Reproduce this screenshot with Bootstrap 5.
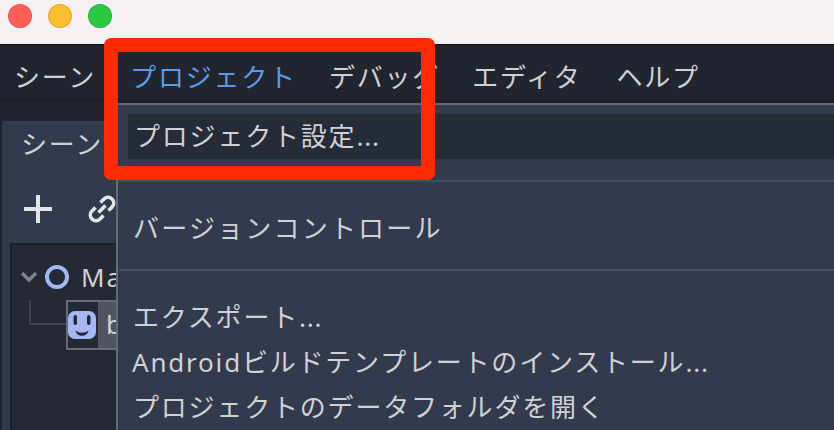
<!DOCTYPE html>
<html lang="ja">
<head>
  <meta charset="UTF-8" />
  <title>プロジェクト設定</title>
  <link href="https://cdn.jsdelivr.net/npm/bootstrap@5.3.0/dist/css/bootstrap.min.css" rel="stylesheet" />
  <style>
    html, body { height: 430px; overflow: hidden; }
    body { background: #21252f; color: #d0d1d4; font-family: "Noto Sans", "Noto Sans CJK JP", sans-serif; font-size: 26px; letter-spacing: 1.8px; line-height: 34px; position: relative; }
    .title-bar { height: 45px; background: #f6f0f2; border-bottom: 1px solid #111; padding: 4px 0 0 8px; gap: 16px; }
    .traffic { width: 24px; height: 24px; border-radius: 50%; border: 1px solid rgba(0,0,0,.1); }
    .menu-bar { height: 58px; padding: 6px 0 0 14px; background: linear-gradient(#21252f 85%, #1c1f28); gap: 32px; }
    .menu-active { color: #5c9be8; margin-left: 2px; }
    .menu-help { margin-left: 3px; }
    .work-row { height: 327px; }
    .side-panel { width: 116px; margin: 18px 0 0 2px; background: #343a4e; border-radius: 3px 0 0 0; overflow: hidden; }
    .tab-label { padding: 6px 0 0 19px; height: 50px; white-space: nowrap; }
    .tool-row { height: 72px; padding: 23px 0 0 21px; gap: 34px; }
    .tree-box { background: #252935; border: 2px solid #1c2029; border-width: 2px 0 0 2px; margin-left: 8px; height: 190px; padding: 8px 0 0 8px; white-space: nowrap; }
    .tree-line { height: 47px; }
    .tree-line svg { flex: none; }
    .node-ring { margin-left: 6px; }
    .node-name { margin-left: 11px; }
    .tree-link { width: 37px; height: 25px; border-left: 2px solid #3e4350; border-bottom: 2px solid #3e4350; margin-left: 9px; flex: none; align-self: flex-start; }
    .tree-sel { height: 50px; border: 2px solid #666b78; border-right: 0; flex: 1; }
    .sel-icon { width: 30px; flex: none; }
    .sel-text { background: #505460; flex: 1; padding-left: 8px; line-height: 44px; }
    .pop-menu { position: absolute; left: 116px; top: 103px; right: 0; bottom: 0; background: #343a4e; border: 2px solid #666b78; border-right: 0; border-bottom: 0; padding-top: 9px; }
    .pop-item { padding-left: 15px; height: 45px; line-height: 45px; white-space: nowrap; }
    .pop-item.is-hover { background: #262b38; margin-left: 10px; padding-left: 6px; }
    .pop-item.is-latin { padding-left: 14px; }
    .pop-item.is-wide { letter-spacing: 2.2px; }
    .pop-dots { letter-spacing: .8px; }
    .pop-sep { height: 2px; background: #454b5e; }
    .red-box { position: absolute; left: 104px; top: 38px; width: 331px; height: 142px; border: 14px solid #ff2a00; border-radius: 7px; }
  </style>
</head>
<body>
  <div class="title-bar d-flex">
    <span class="traffic" style="background:#ff5f57"></span>
    <span class="traffic" style="background:#febc2e"></span>
    <span class="traffic" style="background:#28c840"></span>
  </div>

  <div class="menu-bar d-flex align-items-center">
    <span>シーン</span>
    <span class="menu-active">プロジェクト</span>
    <span>デバッグ</span>
    <span>エディタ</span>
    <span class="menu-help">ヘルプ</span>
  </div>

  <div class="work-row d-flex">
    <div class="side-panel">
      <div class="tab-label">シーン</div>
      <div class="tool-row d-flex">
        <svg width="30" height="30" viewBox="0 0 30 30"><path d="M15 1v28M1 15h28" stroke="#e4e5e8" stroke-width="4" fill="none"/></svg>
        <svg width="30" height="30" viewBox="0 0 30 30" fill="none" stroke="#e4e5e8" stroke-width="3.6"><path d="M11.5 18.5l7-7"/><path d="M13.5 8.5l3.5-3.5a5.6 5.6 0 0 1 8 8l-3.5 3.5"/><path d="M16.5 21.5l-3.5 3.5a5.6 5.6 0 0 1-8-8l3.5-3.5"/></svg>
      </div>
      <div class="tree-box">
        <div class="tree-line d-flex align-items-center">
          <svg width="18" height="12" viewBox="0 0 18 12"><path d="M2 2l7 7 7-7" stroke="#808389" stroke-width="3.4" fill="none"/></svg>
          <svg width="26" height="26" viewBox="0 0 26 26" class="node-ring"><circle cx="13" cy="13" r="10" stroke="#a5b7f3" stroke-width="4" fill="none"/></svg>
          <span class="node-name">Main</span>
        </div>
        <div class="d-flex">
          <div class="tree-link"></div>
          <div class="tree-sel d-flex">
            <div class="sel-icon d-flex align-items-center">
              <svg width="28" height="28" viewBox="0 0 28 28"><rect width="28" height="28" rx="7" fill="#a5b7f3"/><rect x="5.5" y="4" width="3.5" height="10" rx="1.7" fill="#252935"/><rect x="19" y="4" width="3.5" height="10" rx="1.7" fill="#252935"/><path d="M7.5 19.5c4 3 9 3 13 0c-1 7-12 7-13 0z" fill="#252935"/></svg>
            </div>
            <div class="sel-text">b</div>
          </div>
        </div>
      </div>
    </div>
  </div>

  <div class="pop-menu">
    <div class="pop-item is-hover">プロジェクト設定<span class="pop-dots">...</span></div>
    <div style="height:21px"></div>
    <div class="pop-sep"></div>
    <div class="pop-item is-wide mt-4">バージョンコントロール</div>
    <div style="height:18px"></div>
    <div class="pop-sep"></div>
    <div class="pop-item mt-4">エクスポート<span class="pop-dots">...</span></div>
    <div class="pop-item is-latin">Androidビルドテンプレートのインストール<span class="pop-dots">...</span></div>
    <div class="pop-item">プロジェクトのデータフォルダを開く</div>
  </div>

  <div class="red-box"></div>
</body>
</html>
